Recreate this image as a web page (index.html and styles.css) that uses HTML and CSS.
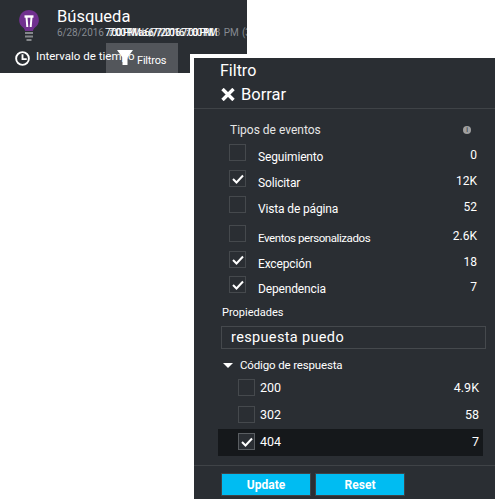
FILE: index.html
```html
<!DOCTYPE html>
<html lang="en">
<head>
    <meta charset="UTF-8">
    <title>Búsqueda</title>
    <link rel="stylesheet" href="styles.css">
</head>
<body>

    <div class="header">
        <div class="title-row">
            <svg class="bulb" width="20" height="32" viewBox="0 0 20 32">
                <path d="M10 0a9.800 9.800 0 0 0-6 17.500c1.300 1 1.800 2.200 2 3.500h8c.2-1.300.7-2.500 2-3.500A9.800 9.800 0 0 0 10 0z" fill="#70308f"/>
                <path d="M5.500 6.500h9" stroke="#fff" stroke-width="2.400" fill="none"/>
                <path d="M7.500 7l.8 10M12.500 7l-.8 10" stroke="#fff" stroke-width="2" fill="none"/>
                <path d="M6 23h8M6 26.500h8M7.500 30h5" stroke="#85888c" stroke-width="2"/>
            </svg>
            <div class="title-text">
                <h1>Búsqueda</h1>
                <div class="dates">
                    6/28/2016 7:00 PM a 6/7/2016 7:03 PM (3
                    <span class="date-over first">7:00 PM a 6/7/2016 7:00 PM</span>
                    <span class="date-over second">7:00 PM a 6/7/2016 7:00 PM</span>
                </div>
            </div>
        </div>
        <div class="tab-row">
            <div class="tab-time">
                <svg width="15" height="15" viewBox="0 0 16 16">
                    <circle cx="8" cy="8" r="6.800" fill="none" stroke="#fff" stroke-width="2"/>
                    <path d="M8 3.500v5.200h4.500" fill="none" stroke="#fff" stroke-width="2"/>
                </svg>
                <span>Intervalo de tiempo</span>
            </div>
            <div class="tab-filter">
                <svg width="16" height="15" viewBox="0 0 16 15">
                    <path d="M0 0h16l-5.500 7.500V15h-5V7.500z" fill="#fff"/>
                </svg>
                <span>Filtros</span>
            </div>
        </div>
    </div>

    <div class="panel">
        <div class="panel-head">
            <h2>Filtro</h2>
            <div class="clear">
                <svg width="14" height="13" viewBox="0 0 14 13">
                    <path d="M1.500 1l11 11M12.500 1l-11 11" stroke="#fff" stroke-width="3.400"/>
                </svg>
                <span>Borrar</span>
            </div>
        </div>

        <div class="panel-body">
            <div class="section-title">
                <span>Tipos de eventos</span>
                <span class="info">i</span>
            </div>

            <div class="event-list">
                <div class="event-row">
                    <span class="box"></span>
                    <span class="event-name">Seguimiento</span>
                    <span class="count">0</span>
                </div>
                <div class="event-row">
                    <span class="box"><svg class="tick" viewBox="0 0 12 10"><path d="M1 5l3.500 3.500L11 1.500" /></svg></span>
                    <span class="event-name">Solicitar</span>
                    <span class="count">12K</span>
                </div>
                <div class="event-row tall">
                    <span class="box"></span>
                    <span class="event-name">Vista de página</span>
                    <span class="count">52</span>
                </div>
                <div class="event-row">
                    <span class="box"></span>
                    <span class="event-name narrow">Eventos personalizados</span>
                    <span class="count">2.6K</span>
                </div>
                <div class="event-row short">
                    <span class="box"><svg class="tick" viewBox="0 0 12 10"><path d="M1 5l3.500 3.500L11 1.500" /></svg></span>
                    <span class="event-name">Excepción</span>
                    <span class="count">18</span>
                </div>
                <div class="event-row last">
                    <span class="box"><svg class="tick" viewBox="0 0 12 10"><path d="M1 5l3.500 3.500L11 1.500" /></svg></span>
                    <span class="event-name">Dependencia</span>
                    <span class="count">7</span>
                </div>
            </div>

            <div class="props-label">Propiedades</div>
            <div class="search-box">respuesta puedo</div>

            <div class="code-title">
                <span class="arrow"></span>
                <span>Código de respuesta</span>
            </div>
            <div class="code-list">
                <div class="code-row">
                    <span class="box"></span>
                    <span class="code-name">200</span>
                    <span class="count">4.9K</span>
                </div>
                <div class="code-row">
                    <span class="box"></span>
                    <span class="code-name">302</span>
                    <span class="count">58</span>
                </div>
                <div class="code-row selected">
                    <span class="box"><svg class="tick" viewBox="0 0 12 10"><path d="M1 5l3.500 3.500L11 1.500" /></svg></span>
                    <span class="code-name">404</span>
                    <span class="count">7</span>
                </div>
            </div>
        </div>

        <div class="panel-foot">
            <button>Update</button>
            <button>Reset</button>
        </div>
    </div>

</body>
</html>
```

FILE: styles.css
```css
* {
    margin: 0;
    padding: 0;
    box-sizing: border-box;
    font-family: "Roboto", "Liberation Sans", sans-serif;
}

body {
    background-color: #fff;
    color: #fff;
    width: 495px;
    height: 499px;
    overflow: hidden;
}

.header {
    width: 247px;
    height: 73px;
    background-color: #2a2e33;
    overflow: hidden;
}

.title-row {
    display: flex;
    height: 43px;
    padding: 9px 0 0 19px;
}

.bulb {
    flex: none;
    margin-top: 1px;
    margin-right: 18px;
}

h1 {
    font-size: 16.5px;
    font-weight: 400;
    line-height: 16px;
}

.dates {
    position: relative;
    margin-top: 2px;
    font-size: 10px;
    line-height: 12px;
    letter-spacing: -0.1px;
    word-spacing: 1.1px;
    white-space: nowrap;
    color: #858a91;
}

.date-over {
    position: absolute;
    top: 0;
    color: #fff;
    letter-spacing: -0.8px;
    word-spacing: 0;
}

.date-over.first {
    left: 48px;
}

.date-over.second {
    left: 52px;
}

.tab-row {
    display: flex;
    height: 30px;
}

.tab-time {
    position: relative;
    z-index: 1;
    display: flex;
    flex: none;
    gap: 6px;
    width: 106px;
    padding: 6px 0 0 15px;
    font-size: 11.500px;
    white-space: nowrap;
}

.tab-time svg {
    flex: none;
    margin-top: 2px;
}

.tab-filter {
    display: flex;
    align-items: center;
    gap: 4px;
    width: 72px;
    padding: 4px 0 0 11px;
    font-size: 11px;
    letter-spacing: -0.2px;
    background-color: #53565b;
}

.tab-filter svg {
    position: relative;
    z-index: 2;
    flex: none;
    margin-top: -6px;
}

.panel {
    position: absolute;
    left: 190px;
    top: 54px;
    width: 305px;
    height: 445px;
    border-left: 4px solid #fff;
    border-top: 4px solid #fff;
    background-color: #2a2e33;
}

.panel-head {
    height: 51px;
    padding: 3px 0 0 26px;
    border-bottom: 1px solid #3f4347;
}

h2 {
    font-size: 16px;
    font-weight: 400;
    line-height: 19px;
}

.clear {
    display: flex;
    align-items: center;
    gap: 6px;
    margin-top: 5px;
    margin-left: 1px;
    font-size: 16.500px;
    line-height: 19px;
}

.panel-body {
    height: 356px;
    padding: 14px 9px 0 27px;
}

.section-title {
    display: flex;
    justify-content: space-between;
    align-items: center;
    padding: 0 15px 0 9px;
    font-size: 12px;
    line-height: 14px;
    color: #e6e6e6;
}

.info {
    width: 8px;
    height: 8px;
    border-radius: 50%;
    background-color: #a0a0a0;
    color: #2a2e33;
    font-size: 7px;
    line-height: 8px;
    text-align: center;
}

.event-list {
    margin-top: 7px;
}

.event-row {
    display: flex;
    height: 26px;
    padding: 0 9px 0 8px;
    font-size: 12px;
    line-height: 14px;
}

.event-row.tall {
    height: 29px;
}

.event-row.short {
    height: 25px;
}

.event-row.last {
    height: 30px;
}

.box {
    display: flex;
    align-items: center;
    justify-content: center;
    flex: none;
    width: 17px;
    height: 17px;
    border: 1px solid #45494d;
}

.tick {
    width: 12px;
    height: 10px;
    fill: none;
    stroke: #fff;
    stroke-width: 2;
}

.event-name {
    flex: 1;
    margin-left: 12px;
    padding-top: 6px;
    letter-spacing: -0.15px;
}

.event-name.narrow {
    font-size: 11.500px;
    letter-spacing: -0.42px;
}

.count {
    padding-top: 4px;
}

.props-label {
    font-size: 11px;
    line-height: 14px;
    padding-left: 1px;
}

.search-box {
    height: 23px;
    margin-top: 6px;
    padding-left: 9px;
    border: 1px solid #45494d;
    font-size: 14.500px;
    line-height: 21px;
    letter-spacing: 0.35px;
}

.code-title {
    display: flex;
    align-items: center;
    gap: 7px;
    margin-top: 9px;
    padding-left: 2px;
    font-size: 11.500px;
    line-height: 14px;
    letter-spacing: -0.15px;
}

.arrow {
    width: 0;
    height: 0;
    border-left: 5px solid transparent;
    border-right: 5px solid transparent;
    border-top: 5px solid #fff;
}

.code-list {
    margin-top: 3px;
}

.code-row {
    display: flex;
    height: 27px;
    width: 265px;
    margin-left: -3px;
    padding: 4px 4px 0 20px;
    font-size: 12.500px;
    line-height: 18px;
}

.code-name {
    flex: 1;
    margin-left: 5px;
}

.code-row .count {
    padding-top: 0;
}

.selected {
    background-color: #15181b;
}

.selected .box {
    border-color: #5a5e62;
    background-color: #2a2e33;
}

.panel-foot {
    display: flex;
    gap: 4px;
    height: 34px;
    padding: 7px 0 0 27px;
    border-top: 1px solid #3f4347;
}

button {
    width: 90px;
    height: 23px;
    border: 1px solid #3f4347;
    background-color: #00bcf2;
    color: #fff;
    font-size: 12px;
    font-weight: bold;
}
```
